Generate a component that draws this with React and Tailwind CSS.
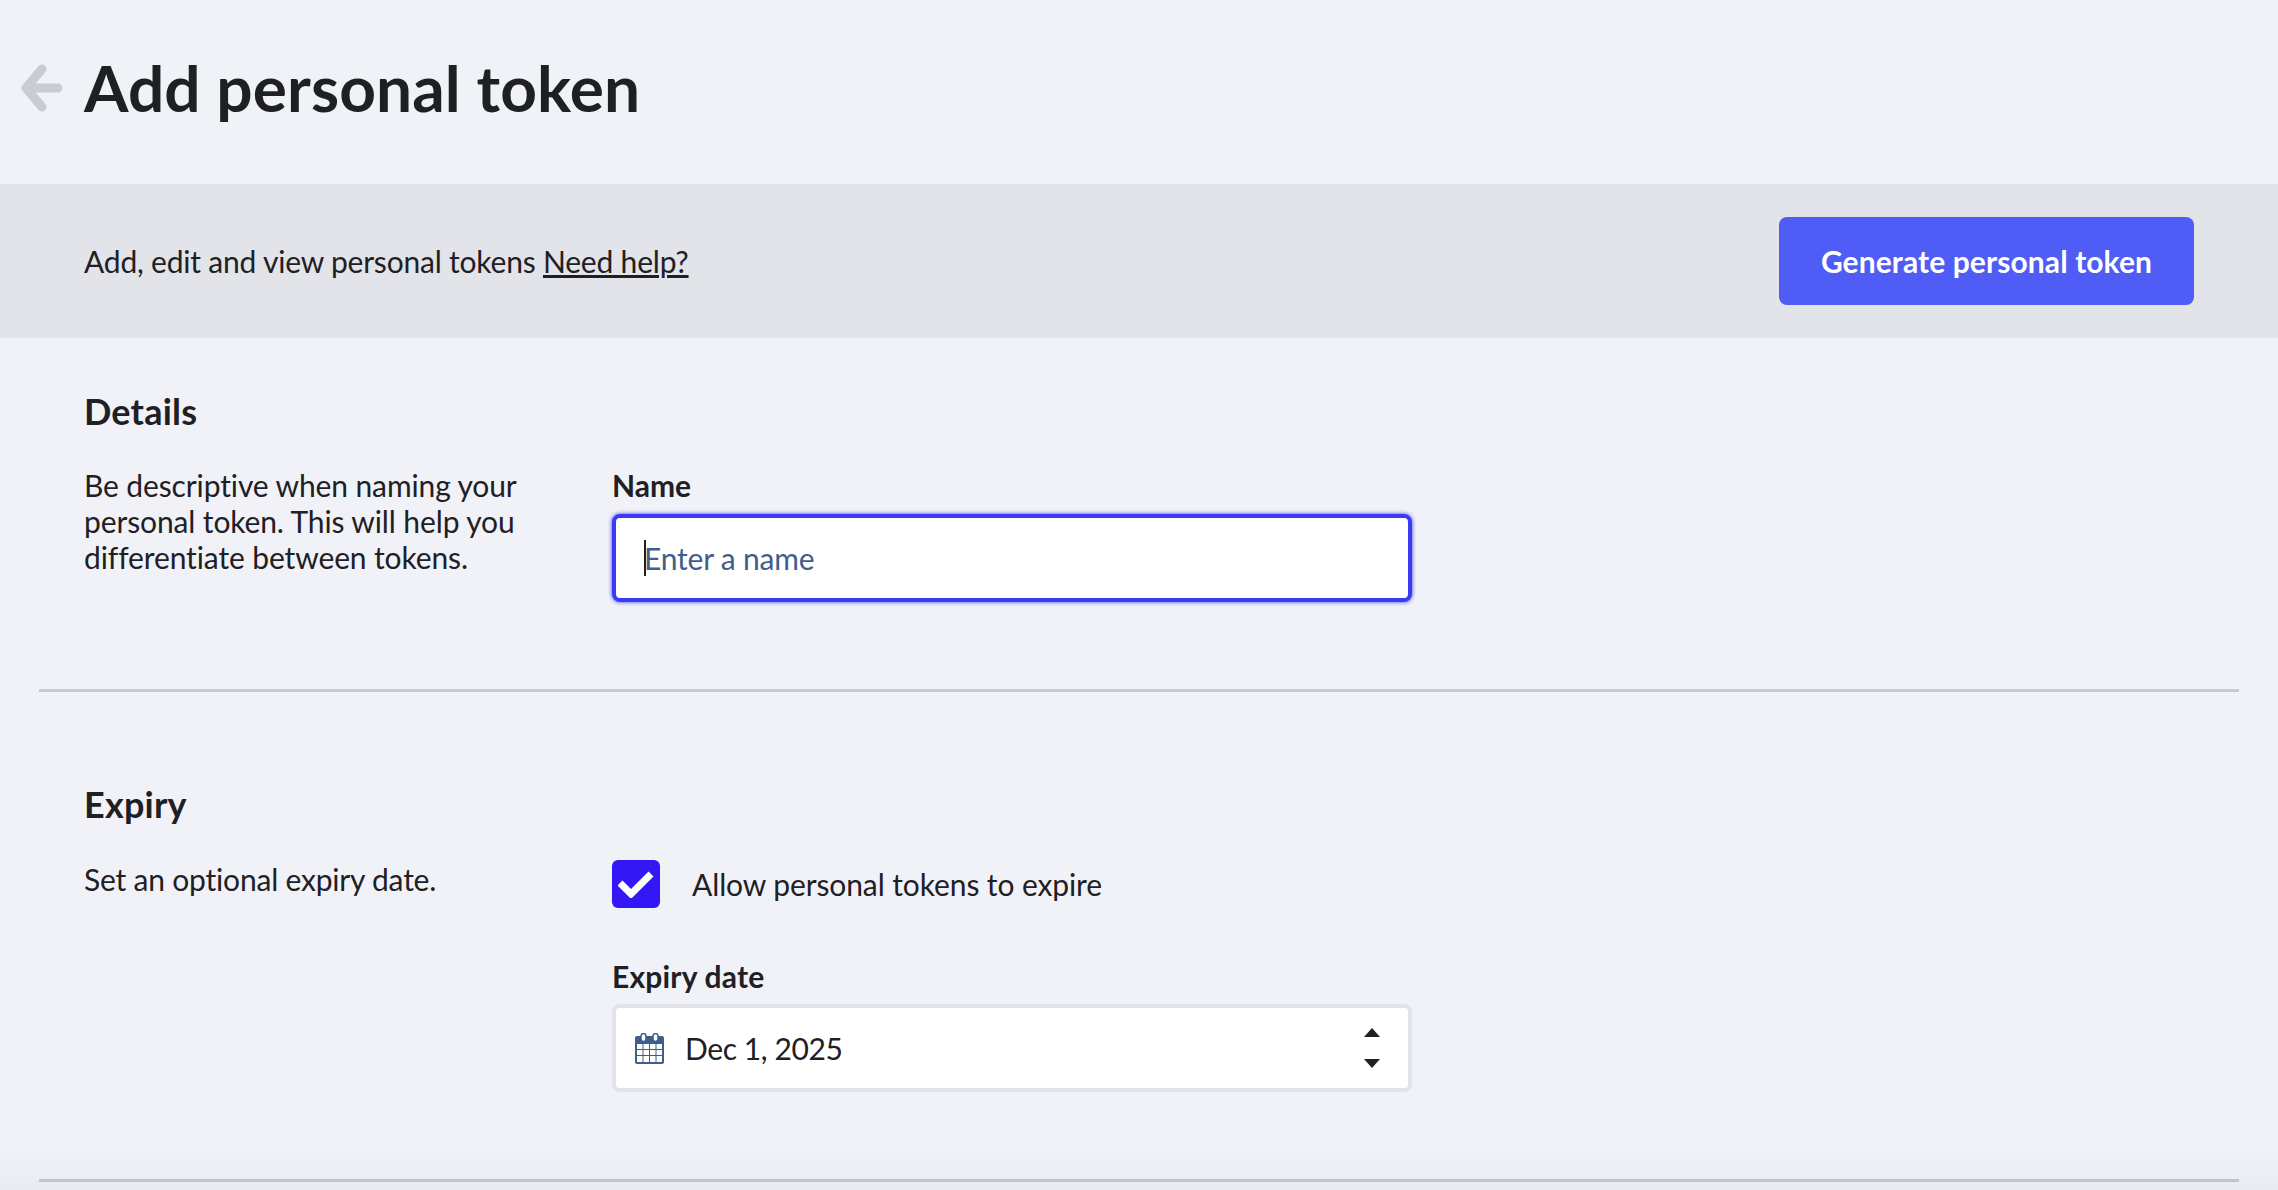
import React from 'react';

const Arrow = () => (
  <svg width="42" height="48" viewBox="0 0 42 48" fill="none" stroke="#cbccd2" strokeWidth="9" strokeLinecap="round" strokeLinejoin="round">
    <path d="M21 5 5 24l16 19M6 24h31" />
  </svg>
);

const Calendar = () => (
  <svg width="29" height="31" viewBox="0 0 29 31" className="shrink-0">
    <path d="M2 3h25a2 2 0 0 1 2 2v24a2 2 0 0 1-2 2H2a2 2 0 0 1-2-2V5a2 2 0 0 1 2-2Z" fill="#3f5f8a" />
    <rect x="6" y="0.5" width="5" height="8" rx="2.5" fill="#fff" stroke="#3f5f8a" strokeWidth="1.5" />
    <rect x="18" y="0.5" width="5" height="8" rx="2.5" fill="#fff" stroke="#3f5f8a" strokeWidth="1.5" />
    <g fill="#fff">
      <rect x="2" y="11" width="5.5" height="5" /><rect x="8.5" y="11" width="5.5" height="5" /><rect x="15" y="11" width="5.5" height="5" /><rect x="21.5" y="11" width="5.5" height="5" />
      <rect x="2" y="17" width="5.5" height="5" /><rect x="8.5" y="17" width="5.5" height="5" /><rect x="15" y="17" width="5.5" height="5" /><rect x="21.5" y="17" width="5.5" height="5" />
      <rect x="2" y="23" width="5.5" height="6" /><rect x="8.5" y="23" width="5.5" height="6" /><rect x="15" y="23" width="5.5" height="6" /><rect x="21.5" y="23" width="5.5" height="6" />
    </g>
  </svg>
);

export default function App() {
  return (
    <div className="relative h-[1190px] overflow-hidden bg-[#f0f2f8] font-['Lato',sans-serif] text-[#1f2024] tracking-[-0.2px] [font-variant-ligatures:none]">
      {/* Header */}
      <header className="flex h-[184px] items-center pl-[21px] pb-[8px]">
        <Arrow />
        <h1 className="ml-[21px] text-[64px] leading-none font-bold tracking-[0.1px]">Add personal token</h1>
      </header>

      {/* Info band */}
      <div className="flex h-[154px] items-center justify-between bg-[#e2e4e9] pl-[84px] pr-[84px]">
        <p className="text-[30px] leading-9">
          Add, edit and view personal tokens <a href="#" className="underline">Need help?</a>
        </p>
        <button className="flex h-[88px] w-[415px] items-center justify-center rounded-lg bg-[#4f5cf5] text-[30px] font-bold tracking-[0.1px] text-white">
          Generate personal token
        </button>
      </div>

      {/* Details */}
      <section className="mx-[39px] flex h-[354px] border-b-[3px] border-[#c8c9ce] pl-[45px] pt-[51px]">
        <div className="w-[528px] shrink-0">
          <h2 className="text-[36px] leading-[44px] font-bold tracking-[0.2px]">Details</h2>
          <p className="mt-[34px] w-[450px] text-[30px] leading-[36px] tracking-[-0.12px]">
            Be descriptive when naming your personal token. This will help you differentiate between tokens.
          </p>
        </div>
        <div className="w-[800px] pt-[78px]">
          <label className="block text-[30px] leading-9 font-bold tracking-[0px]">Name</label>
          <div className="mt-[11px] flex h-[88px] items-center rounded-lg border-4 border-[#3b3cf2] bg-white pl-[28px] shadow-[0_0_4px_#3b3cf2]">
            <span className="border-l-2 border-[#1f2024] text-[30px] leading-[36px] text-[#3f5f8a]">
              <span className="-ml-[2px] inline-block">Enter a name</span>
            </span>
          </div>
        </div>
      </section>

      {/* Expiry */}
      <section className="mx-[39px] flex h-[490px] border-b-[3px] border-[#c8c9ce] pl-[45px] pt-[90px]">
        <div className="w-[528px] shrink-0">
          <h2 className="text-[36px] leading-[44px] font-bold tracking-[0.2px]">Expiry</h2>
          <p className="mt-[35px] text-[30px] leading-[36px]">Set an optional expiry date.</p>
        </div>
        <div className="w-[800px] pt-[78px]">
          <div className="flex items-center gap-[32px]">
            <span className="flex h-[48px] w-[48px] items-center justify-center rounded-md bg-[#3318f5]">
              <svg width="36" height="28" viewBox="0 0 36 28" fill="none" stroke="#fff" strokeWidth="7">
                <path d="M2 13l11 11L33 4" />
              </svg>
            </span>
            <span className="text-[30px] leading-9 tracking-[-0.1px]">Allow personal tokens to expire</span>
          </div>
          <label className="mt-[50px] block text-[30px] leading-9 font-bold tracking-[0.2px]">Expiry date</label>
          <div className="mt-[10px] flex h-[88px] items-center rounded-lg border-4 border-[#e3e4ea] bg-white pl-[19px] pr-[28px]">
            <Calendar />
            <span className="ml-[21px] text-[30px] leading-9 tracking-[-0.4px]">Dec 1, 2025</span>
            <span className="ml-auto flex flex-col items-center gap-[22px]">
              <svg width="16" height="9" viewBox="0 0 16 9"><path d="M8 0l8 9H0z" fill="#1f2024" /></svg>
              <svg width="16" height="9" viewBox="0 0 16 9"><path d="M8 9 0 0h16z" fill="#1f2024" /></svg>
            </span>
          </div>
        </div>
      </section>

      {/* Bottom fade */}
      <div className="absolute inset-x-0 bottom-0 h-[40px] bg-gradient-to-b from-transparent to-[#00000008]" />
    </div>
  );
}
